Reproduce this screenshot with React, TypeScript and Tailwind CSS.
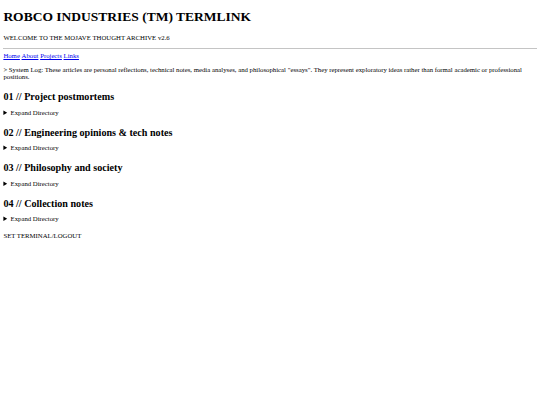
import React from "react";

const sections = [
  "01 // Project postmortems",
  "02 // Engineering opinions & tech notes",
  "03 // Philosophy and society",
  "04 // Collection notes",
];

export default function App() {
  return (
    <div
      className="min-h-[405px] bg-white px-[3.375px] pb-[3.375px] pt-[0.01px] text-black text-[6.75px] leading-[normal]"
      style={{ fontFamily: '"Liberation Serif", "Times New Roman", serif' }}
    >
      <h1 className="mt-[9.05px] mb-[9.05px] text-[13.5px] font-bold leading-[normal]">
        ROBCO INDUSTRIES (TM) TERMLINK
      </h1>
      <p className="my-[6.75px]">WELCOME TO THE MOJAVE THOUGHT ARCHIVE v2.6</p>
      <hr className="my-[3.375px] border-0 border-t border-[#c4c4c4]" />
      <div className="flex gap-[1.7px]">
        <a href="#" className="text-[#0000EE] underline">Home</a>
        <a href="#" className="text-[#0000EE] underline">About</a>
        <a href="#" className="text-[#0000EE] underline">Projects</a>
        <a href="#" className="text-[#0000EE] underline">Links</a>
      </div>
      <p className="mt-[6.75px] mb-[11.3px]">
        &gt; System Log: These articles are personal reflections, technical notes, media analyses, and
        philosophical "essays". They represent exploratory ideas rather than formal academic or
        professional positions.
      </p>
      {sections.map((s) => (
        <section key={s}>
          <h2 className="mt-[10.9px] mb-[6.6px] text-[10.125px] font-bold leading-[normal]">{s}</h2>
          <details>
            <summary className="cursor-pointer">Expand Directory</summary>
          </details>
        </section>
      ))}
      <p className="mt-[9.5px]">SET TERMINAL/LOGOUT</p>
    </div>
  );
}
